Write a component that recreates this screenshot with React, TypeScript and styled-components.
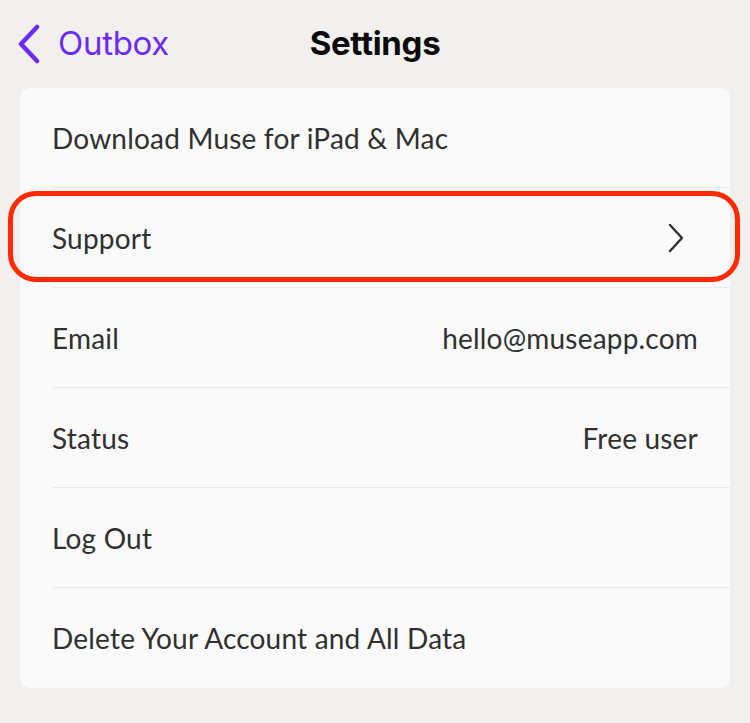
import React from "react";
import styled, { createGlobalStyle } from "styled-components";

const GlobalStyle = createGlobalStyle`
  html, body {
    margin: 0;
    padding: 0;
    background: #f1f0ee;
  }
  body {
    font-family: Lato, "Noto Sans", sans-serif;
  }
`;

type Item = {
  label: string;
  value?: string;
  chevron?: boolean;
  highlight?: boolean;
};

const items: Item[] = [
  { label: "Download Muse for iPad & Mac" },
  { label: "Support", chevron: true, highlight: true },
  { label: "Email", value: "hello@museapp.com" },
  { label: "Status", value: "Free user" },
  { label: "Log Out" },
  { label: "Delete Your Account and All Data" },
];

const App: React.FC = () => {
  return (
    <Page>
      <GlobalStyle />
      <NavBar>
        <BackButton>
          <svg width="26" height="40" viewBox="0 0 26 40" fill="none">
            <path
              d="M21 3 L5 20 L21 37"
              stroke="#6c2bf5"
              strokeWidth="4.5"
              strokeLinecap="round"
              strokeLinejoin="round"
            />
          </svg>
          <span>Outbox</span>
        </BackButton>
        <Title>Settings</Title>
        <div />
      </NavBar>

      <Card>
        {items.map((item, i) => (
          <Row key={item.label}>
            <RowInner $last={i === items.length - 1}>
              <Label>{item.label}</Label>
              {item.value && <Label>{item.value}</Label>}
              {item.chevron && (
                <svg width="20" height="32" viewBox="0 0 20 32" fill="none">
                  <path
                    d="M4 3 L16 16 L4 29"
                    stroke="#2f2f2f"
                    strokeWidth="2.4"
                    strokeLinecap="round"
                    strokeLinejoin="round"
                  />
                </svg>
              )}
            </RowInner>
            {item.highlight && <Highlight />}
          </Row>
        ))}
      </Card>
    </Page>
  );
};

const Page = styled.div`
  width: 750px;
  min-height: 723px;
  background: #f1f0ee;
`;

const NavBar = styled.div`
  height: 88px;
  display: grid;
  grid-template-columns: 1fr auto 1fr;
  align-items: center;
  padding: 0 16px;
  box-sizing: border-box;
`;

const BackButton = styled.div`
  display: flex;
  align-items: center;
  gap: 16px;
  color: #6c2bf5;
  font-family: Inter, Roboto, sans-serif;
  font-size: 33px;
  font-weight: 400;
  letter-spacing: -0.3px;
  span {
    margin-top: -2px;
  }
`;

const Title = styled.div`
  font-family: Inter, Roboto, sans-serif;
  font-size: 33px;
  font-weight: 700;
  color: #0a0a0a;
  letter-spacing: -0.3px;
  margin-top: -2px;
`;

const Card = styled.div`
  margin: 0 20px;
  background: #fafafa;
  border-radius: 10px;
`;

const Row = styled.div`
  position: relative;
  padding-left: 32px;
`;

const RowInner = styled.div<{ $last?: boolean }>`
  height: 100px;
  box-sizing: border-box;
  display: flex;
  align-items: center;
  justify-content: space-between;
  padding-right: 32px;
  border-bottom: ${({ $last }) => ($last ? "none" : "1px solid #ebebeb")};
  svg {
    margin-right: 12px;
  }
`;

const Label = styled.span`
  font-size: 28px;
  letter-spacing: 0.2px;
  color: #303030;
`;

const Highlight = styled.div`
  position: absolute;
  left: -12px;
  right: -10px;
  top: 3px;
  bottom: 6px;
  border: 5px solid #ff2a00;
  border-radius: 28px;
  pointer-events: none;
`;

export default App;
